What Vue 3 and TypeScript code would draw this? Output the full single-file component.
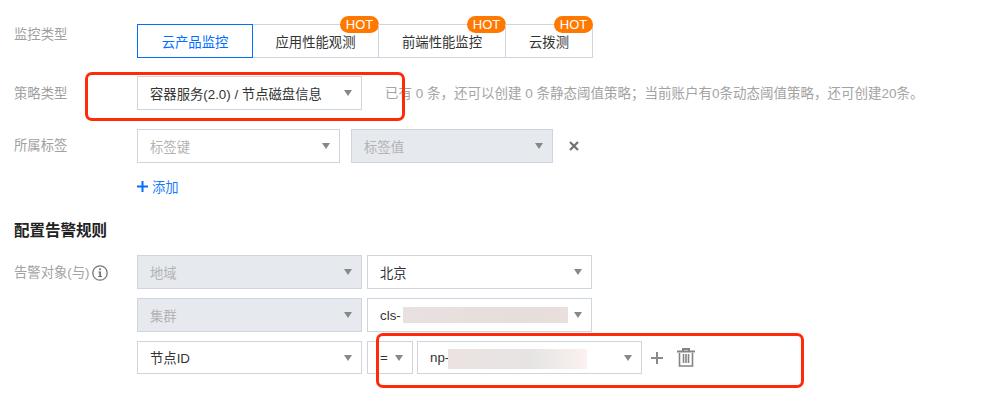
<script setup lang="ts">
interface Tab { name: string; hot: boolean; active: boolean; width: number }
const tabs: Tab[] = [
  { name: '云产品监控', hot: false, active: true, width: 116 },
  { name: '应用性能观测', hot: true, active: false, width: 127 },
  { name: '前端性能监控', hot: true, active: false, width: 128 },
  { name: '云拨测', hot: true, active: false, width: 88 },
]
</script>

<template>
  <div class="page">
    <div class="row tabs-row">
      <div class="label">监控类型</div>
      <div class="tabs">
        <div
          v-for="t in tabs"
          :key="t.name"
          class="tab"
          :class="{ active: t.active }"
          :style="{ width: t.width + 'px' }"
        >
          {{ t.name }}
          <span v-if="t.hot" class="hot">HOT</span>
        </div>
      </div>
    </div>

    <div class="row strategy-row">
      <div class="label">策略类型</div>
      <div class="select w225"><span>容器服务(2.0) / 节点磁盘信息</span><i class="caret"></i></div>
      <div class="hint">已有 0 条，还可以创建 0 条静态阈值策略；当前账户有0条动态阈值策略，还可创建20条。</div>
      <div class="mark mark-top"></div>
    </div>

    <div class="row tag-row">
      <div class="label">所属标签</div>
      <div class="select w203 placeholder"><span>标签键</span><i class="caret"></i></div>
      <div class="select w202 disabled"><span>标签值</span><i class="caret"></i></div>
      <svg class="close" width="10" height="10" viewBox="0 0 10 10">
        <path d="M1 1 9 9M9 1 1 9" stroke="#6f7275" stroke-width="2.2" fill="none" />
      </svg>
    </div>

    <div class="add">
      <svg width="11" height="11" viewBox="0 0 11 11">
        <path d="M5.5 0v11M0 5.5h11" stroke="#006eff" stroke-width="2" fill="none" />
      </svg>
      <span>添加</span>
    </div>

    <h3 class="heading">配置告警规则</h3>

    <div class="row rule-row">
      <div class="label">
        告警对象(与)
        <svg class="info" width="16" height="16" viewBox="0 0 16 16">
          <circle cx="8" cy="8" r="7.2" stroke="#777" stroke-width="1.3" fill="none" />
          <rect x="7.2" y="3.4" width="1.7" height="1.8" fill="#666" />
          <path d="M6.300 6.600h2.600v4.500h1.100v1H6.200v-1h1.100V7.600h-1z" fill="#666" />
        </svg>
      </div>
      <div class="rule-list">
        <div class="rule">
          <div class="select w225 disabled"><span>地域</span><i class="caret"></i></div>
          <div class="select w225 value"><span>北京</span><i class="caret"></i></div>
        </div>
        <div class="rule">
          <div class="select w225 disabled"><span>集群</span><i class="caret"></i></div>
          <div class="select w225 value">
            <span>cls-</span>
            <b class="blur blur-cls"></b>
            <i class="caret"></i>
          </div>
        </div>
        <div class="rule last">
          <div class="select w225 value"><span>节点ID</span><i class="caret"></i></div>
          <div class="select op value"><span>=</span><i class="caret"></i></div>
          <div class="select w225 value node">
            <span>np-</span>
            <b class="blur blur-np"></b>
            <i class="caret"></i>
          </div>
          <svg class="plus" width="12" height="12" viewBox="0 0 12 12">
            <path d="M6 0v12M0 6h12" stroke="#8a8a8a" stroke-width="2" fill="none" />
          </svg>
          <svg class="trash" width="18" height="19" viewBox="0 0 18 19">
            <path d="M6 2.500V1h6v1.500M0 3.500h18" stroke="#848484" stroke-width="2" fill="none" />
            <path d="M2.500 5v13h13V5M6.500 6v9M9 6v9M11.500 6v9" stroke="#848484" stroke-width="1.600" fill="none" />
          </svg>
          <div class="mark mark-bottom"></div>
        </div>
      </div>
    </div>
  </div>
</template>

<style>
html, body { margin: 0; background: #fff; overflow: hidden; }
</style>

<style scoped>
.page {
  width: 985px;
  height: 403px;
  box-sizing: border-box;
  padding: 24px 0 0 14px;
  background: #fff;
  font-family: "Liberation Sans", "Noto Sans CJK SC", sans-serif;
  font-size: 13.33px;
  color: #333;
}
.row { display: flex; align-items: flex-start; position: relative; }
.label {
  width: 123px;
  flex: none;
  color: #a0a0a0;
  line-height: 20px;
  white-space: nowrap;
}
.tabs-row .label { margin-top: 1px; }
.tabs { display: flex; height: 34px; }
.tab {
  position: relative;
  box-sizing: border-box;
  height: 34px;
  margin-left: -1px;
  border: 1px solid #cfd5de;
  display: flex;
  align-items: center;
  justify-content: center;
  color: #333;
}
.tab:first-child { margin-left: 0; }
.tab.active {
  border-color: #006eff;
  color: #006eff;
  z-index: 1;
}
.hot {
  position: absolute;
  right: -1px;
  top: -9px;
  width: 39px;
  height: 17px;
  border-radius: 9px;
  background: #ff7800;
  color: #fff;
  font-size: 13px;
  line-height: 17px;
  text-align: center;
}
.strategy-row { margin-top: 18px; }
.strategy-row .label { margin-top: 8px; }
.select {
  position: relative;
  flex: none;
  box-sizing: border-box;
  height: 34px;
  border: 1px solid #cfd5de;
  background: #fff;
  display: flex;
  align-items: center;
  padding-left: 12px;
  color: #333;
  white-space: nowrap;
}
.w225 { width: 225px; }
.w203 { width: 203px; }
.w202 { width: 202px; }
.caret {
  position: absolute;
  right: 9px;
  top: 50%;
  margin-top: -3px;
  width: 0;
  height: 0;
  border-left: 4.500px solid transparent;
  border-right: 4.500px solid transparent;
  border-top: 6px solid #888;
}
.hint {
  margin: 9px 0 0 23px;
  color: #a3a3a3;
  font-size: 13.500px;
  line-height: 18px;
  white-space: nowrap;
}
.mark {
  position: absolute;
  box-sizing: border-box;
  border: 3px solid #ff2a08;
  border-radius: 7px;
  pointer-events: none;
}
.mark-top { left: 71px; top: -4px; width: 320px; height: 49px; }
.mark-bottom { left: 239px; top: -8px; width: 428px; height: 55px; }
.tag-row { margin-top: 19px; gap: 11px; }
.tag-row .label { margin-top: 7px; margin-right: -11px; }
.placeholder span { color: #b3b3b3; }
.disabled { background: #e6e9ee; }
.disabled span { color: #b3b3b3; }
.close { margin: 12px 0 0 5px; }
.add {
  margin: 13px 0 0 123px;
  display: flex;
  align-items: center;
  gap: 4px;
  height: 20px;
  color: #1a7bff;
}
.heading {
  margin: 25px 0 0;
  font-size: 15.500px;
  line-height: 20px;
  font-weight: 700;
  color: #222;
}
.rule-row { margin-top: 14px; }
.rule-row .label {
  margin-top: 8px;
  display: flex;
  align-items: center;
  gap: 2px;
  color: #a3a3a3;
}
.rule-list { display: flex; flex-direction: column; gap: 9px; }
.rule { display: flex; align-items: center; gap: 5px; position: relative; }
.rule.last { height: 33px; }
.rule.last .select { height: 33px; }
.op { width: 46px; }
.node { margin-left: -1px; }
.blur {
  position: absolute;
  display: block;
  height: 16px;
  filter: blur(0.6px);
  background: linear-gradient(90deg, #e9e1df, #e5dedb 70%, #e9dfdd);
}
.blur-cls { left: 35px; top: 8px; width: 165px; }
.blur-np {
  left: 30px;
  top: 7px;
  width: 139px;
  height: 20px;
  background: linear-gradient(90deg, #ebe3e2, #e6e4e3 60%, #fbf1f0);
}
.plus { margin-left: 4px; }
.trash { margin-left: 9px; margin-top: -1px; }
</style>
